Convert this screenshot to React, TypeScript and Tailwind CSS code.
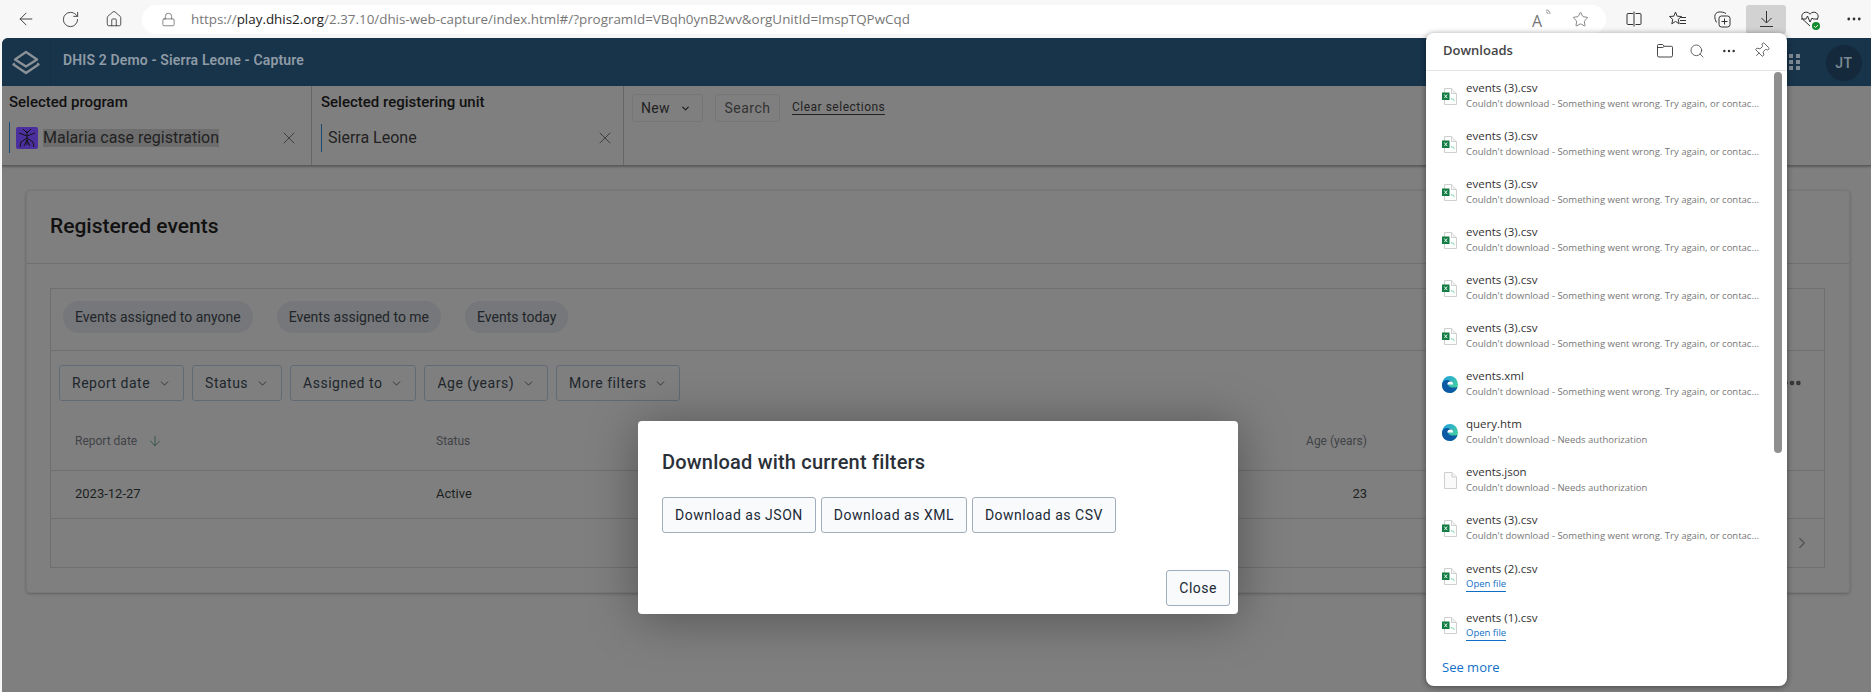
import { ArrowDown, ArrowLeft, ChevronDown, ChevronRight, Ellipsis, House, Lock, RotateCw, Search, Pin, Star, X, MoreHorizontal } from 'lucide-react'

const ROBOTO = 'font-[Roboto,sans-serif]'
const OPEN = 'font-["Open_Sans",sans-serif]'

function ExcelIcon() {
  return (
    <svg width="15" height="17" viewBox="0 0 15 17" className="shrink-0">
      <path d="M2.500.5h7l5 5v11h-12z" fill="#fff" stroke="#cfcfcf" />
      <path d="M9.500.5v5h5" fill="#f2f2f2" stroke="#cfcfcf" />
      <path d="M9 10l1 1.500.8-.8L12.500 13" fill="none" stroke="#7fd8b0" />
      <rect x="0" y="4.500" width="7.500" height="7.500" fill="#107c41" />
      <path d="M2.300 6.500l2.900 3.600M5.200 6.500l-2.900 3.600" stroke="#fff" strokeWidth="0.9" />
    </svg>
  )
}

function EdgeIcon() {
  return (
    <svg width="16" height="17" viewBox="0 0 16 17" className="shrink-0">
      <defs>
        <linearGradient id="edgeTop" x1="0" y1="0" x2="1" y2="1">
          <stop offset="0" stopColor="#1b9de2" />
          <stop offset="1" stopColor="#52de8c" />
        </linearGradient>
      </defs>
      <ellipse cx="8" cy="8.500" rx="8" ry="8.500" fill="url(#edgeTop)" />
      <path d="M0 9.500C0 5.500 2.500 4 5 4c2.500 0 4.500 1.500 5 4H6c0 2.500 2.500 4.500 9.500 3C14 15 11 17 8 17c-4.500 0-8-3-8-7.500z" fill="#0c59a4" />
      <path d="M5.300 8.500h5.900c0-1.800-1.200-3-2.900-3-1.700 0-3 1.300-3 3z" fill="#fff" />
    </svg>
  )
}

function FileIcon() {
  return (
    <svg width="13" height="17" viewBox="0 0 13 17" className="shrink-0">
      <path d="M.5.5h7.500l4.500 4.500v11.500h-12z" fill="#fafafa" stroke="#cfcfcf" />
      <path d="M8 .5v4.500h4.500" fill="#f2f2f2" stroke="#cfcfcf" />
    </svg>
  )
}

type Row = { name: string; detail: string; icon: 'xls' | 'edge' | 'file'; link?: boolean }

function DownloadRow({ name, detail, icon, link }: Row) {
  return (
    <div className={`flex items-center pl-[16px] ${link ? 'h-[49px]' : 'h-12'}`}>
      <div className="flex w-[24px] shrink-0 justify-start">
        {icon === 'xls' && <ExcelIcon />}
        {icon === 'edge' && <EdgeIcon />}
        {icon === 'file' && <div className="pl-[2px]"><FileIcon /></div>}
      </div>
      <div className="min-w-0 flex-1">
        <div className="text-[11.5px] leading-4 text-[#333]">{name}</div>
        {link ? (
          <span className="block w-fit border-b border-[#0f6fc8] text-[9.5px] leading-[14px] text-[#0f6fc8]">{detail}</span>
        ) : (
          <div className="whitespace-nowrap text-[9.5px] leading-4 text-[#777]">{detail}</div>
        )}
      </div>
    </div>
  )
}

const SOMETHING = "Couldn't download - Something went wrong. Try again, or contac..."
const NEEDS = "Couldn't download - Needs authorization"

function DownloadsPanel() {
  const rows: Row[] = [
    { name: 'events (3).csv', detail: SOMETHING, icon: 'xls' },
    { name: 'events (3).csv', detail: SOMETHING, icon: 'xls' },
    { name: 'events (3).csv', detail: SOMETHING, icon: 'xls' },
    { name: 'events (3).csv', detail: SOMETHING, icon: 'xls' },
    { name: 'events (3).csv', detail: SOMETHING, icon: 'xls' },
    { name: 'events (3).csv', detail: SOMETHING, icon: 'xls' },
    { name: 'events.xml', detail: SOMETHING, icon: 'edge' },
    { name: 'query.htm', detail: NEEDS, icon: 'edge' },
    { name: 'events.json', detail: NEEDS, icon: 'file' },
    { name: 'events (3).csv', detail: SOMETHING, icon: 'xls' },
    { name: 'events (2).csv', detail: 'Open file', icon: 'xls', link: true },
    { name: 'events (1).csv', detail: 'Open file', icon: 'xls', link: true },
  ]
  return (
    <div className={`absolute left-[1426px] top-[33px] z-30 w-[361px] rounded-lg bg-white shadow-[0_1px_6px_rgba(0,0,0,0.45)] ${OPEN}`}>
      <div className="flex h-[38px] items-center border-b border-[#e5e5e5] pb-[2px] pl-[17px] pr-[17px]">
        <span className="flex-1 text-[13px] font-semibold text-[#444]">Downloads</span>
        <div className="flex items-center gap-[16px] text-[#333]">
          <svg width="16" height="14" viewBox="0 0 16 14" fill="none" stroke="currentColor" strokeWidth="0.9">
            <path d="M.5 11.500V1.500a1 1 0 0 1 1-1h4l2 1.800h7a1 1 0 0 1 1 1v8.200a1.500 1.500 0 0 1-1.500 1.500h-12A1.500 1.500 0 0 1 .5 11.500zM.5 3.500h5l2-1.200" />
          </svg>
          <Search size={16} strokeWidth={1.1} />
          <MoreHorizontal size={16} strokeWidth={1.7} />
          <Pin size={17} strokeWidth={1} className="rotate-45" />
        </div>
      </div>
      <div className="relative">
        <div className="pt-[1px]">
          {rows.map((r, i) => (
            <DownloadRow key={i} {...r} />
          ))}
        </div>
        <div className="absolute right-[5px] top-[1px] h-[381px] w-[8px] rounded bg-[#8f8f8f]" />
      </div>
      <div className="flex h-[36px] items-center pl-[16px] text-[13px] text-[#0f6fc8]">See more</div>
    </div>
  )
}

function BrowserBar() {
  return (
    <div className="flex h-[38px] items-center bg-[#f7f7f7] text-[#333]">
      <div className="flex w-[142px] shrink-0 items-center pl-[4px]">
        <div className="flex w-[44px] justify-center"><ArrowLeft size={20} strokeWidth={1.1} /></div>
        <div className="flex w-[44px] justify-center"><RotateCw size={19} strokeWidth={1.1} /></div>
        <div className="flex w-[44px] justify-center"><House size={18} strokeWidth={1.1} /></div>
      </div>
      <div className={`flex h-[29px] w-[1464px] shrink-0 items-center rounded-full bg-white pl-[19px] pr-[17px] ${OPEN}`}>
        <Lock size={15} strokeWidth={1} className="text-[#444]" />
        <span className="ml-[15px] flex-1 text-[13.4px] text-[#777]">
          https://<span className="text-[#222]">play.dhis2.org</span>/2.37.10/dhis-web-capture/index.html#/?programId=VBqh0ynB2wv&amp;orgUnitId=ImspTQPwCqd
        </span>
        <div className="relative -mt-[3px] mr-[24px] h-[18px] w-[16px] text-[#777]">
          <span className="text-[16px] leading-[18px]">A</span>
          <svg width="8" height="9" viewBox="0 0 8 9" fill="none" stroke="currentColor" strokeWidth="0.8" className="absolute -right-[5px] top-0">
            <path d="M1 3c1.200 0 2 .8 2 2M1 1c2.500 0 4 1.500 4 4" />
          </svg>
        </div>
        <Star size={17} strokeWidth={1} className="text-[#555]" />
      </div>
      <div className="flex items-center pl-[6px]">
        <div className="flex h-[29px] w-[44px] items-center justify-center">
          <svg width="16" height="16" viewBox="0 0 16 16" fill="none" stroke="currentColor" strokeWidth="1">
            <path d="M7 2.500H2a1 1 0 0 0-1 1v9a1 1 0 0 0 1 1h5M8 .5v15M9.500 2.500H14a1 1 0 0 1 1 1v9a1 1 0 0 1-1 1H9.500" />
          </svg>
        </div>
        <div className="flex h-[29px] w-[44px] items-center justify-center">
          <svg width="18" height="16" viewBox="0 0 18 16" fill="none" stroke="currentColor" strokeWidth="1">
            <path d="M6.500 1l1.700 4.200 4.300.3-3.300 2.900 1 4.400-3.700-2.400-3.700 2.400 1-4.400L.5 5.500l4.300-.3z" />
            <path d="M12 6.500h5M11 9.500h6M11 12.500h6" />
          </svg>
        </div>
        <div className="flex h-[29px] w-[44px] items-center justify-center">
          <svg width="17" height="17" viewBox="0 0 17 17" fill="none" stroke="currentColor" strokeWidth="1">
            <path d="M2.500 11.500C1.500 9.500.8 7.500.8 5.500.8 3 2.500 1.200 5 1c2.500-.2 5 .3 7 1.500" />
            <rect x="5" y="5" width="11" height="11" rx="2.500" />
            <path d="M10.500 7.500v6M7.500 10.500h6" />
          </svg>
        </div>
        <div className="mx-[2px] flex h-[29px] w-[40px] items-center justify-center rounded-[3px] bg-[#d2d2d2]">
          <svg width="13" height="16" viewBox="0 0 13 16" fill="none" stroke="currentColor" strokeWidth="1">
            <path d="M6.500 0v11.500M1.500 7l5 5 5-5M0 15.500h13" />
          </svg>
        </div>
        <div className="relative flex h-[29px] w-[44px] items-center justify-center">
          <svg width="18" height="16" viewBox="0 0 18 16" fill="none" stroke="currentColor" strokeWidth="1">
            <path d="M9 15L2 8.500C.2 6.500.5 3.500 2.500 2c2-1.500 5-1 6.500 1.200C10.500 1 13.500.5 15.500 2c2 1.500 2.300 4.500.5 6.500" />
            <path d="M0 8h5l1.500-3 2.500 6 2-4 1 1h5" />
          </svg>
          <svg width="8" height="8" viewBox="0 0 8 8" className="absolute bottom-[4px] left-[24px]">
            <circle cx="4" cy="4" r="4" fill="#138a2e" />
            <path d="M2 4l1.500 1.500L6 3" fill="none" stroke="#fff" strokeWidth="0.9" />
          </svg>
        </div>
        <div className="flex h-[29px] w-[44px] items-center justify-center"><MoreHorizontal size={18} strokeWidth={1.7} /></div>
      </div>
    </div>
  )
}

function FilterButton({ label }: { label: string }) {
  return (
    <div className="flex h-9 items-center gap-2 rounded-[3px] border border-[#626b75] px-3 text-sm tracking-[0.5px] text-[#20262c]">
      {label}
      <ChevronDown size={13} strokeWidth={1.5} />
    </div>
  )
}

function Chip({ label }: { label: string }) {
  return <div className="flex h-8 items-center rounded-full bg-[#75777a] px-3 text-sm text-[#222529]">{label}</div>
}

function DialogButton({ label }: { label: string }) {
  return (
    <div className="flex h-9 items-center rounded-[3px] border border-[#a0adba] bg-[#f8fafc] px-3 text-sm tracking-[0.5px] text-[#212934]">{label}</div>
  )
}

export default function App() {
  return (
    <div className={`relative h-[692px] w-[1871px] overflow-hidden bg-[#f7f7f7] ${ROBOTO}`}>
      <BrowserBar />

      <div className="ml-[2px] h-[654px] overflow-hidden rounded-tl-md bg-[#7f7f7f]">
        {/* app header */}
        <div className="flex h-[48px] items-center bg-[#18344b]">
          <div className="flex h-full w-[49px] items-center justify-center border-r border-[#16304a]">
            <svg width="28" height="25" viewBox="0 0 28 25" fill="none" stroke="#8b9196" strokeWidth="2.300" strokeLinejoin="round">
              <path d="M14 2L25 9.500 14 16.500 3 9.500z" />
              <path d="M3 13.500L1.500 14.500 14 23l12.500-8.500-1.500-1" />
            </svg>
          </div>
          <span className="-mt-[4px] ml-[12px] text-sm font-semibold tracking-[0.01em] text-[#8e9ba6]">DHIS 2 Demo - Sierra Leone - Capture</span>
          <svg width="18" height="18" viewBox="0 0 18 18" fill="#7d8a95" className="ml-auto mr-[26px]">
            <rect x="0" y="1" width="4" height="4" /><rect x="7" y="1" width="4" height="4" /><rect x="14" y="1" width="4" height="4" />
            <rect x="0" y="7" width="4" height="4" /><rect x="7" y="7" width="4" height="4" /><rect x="14" y="7" width="4" height="4" />
            <rect x="0" y="13" width="4" height="4" /><rect x="7" y="13" width="4" height="4" /><rect x="14" y="13" width="4" height="4" />
          </svg>
          <div className="mr-[9px] mt-[2px] flex size-9 items-center justify-center rounded-full bg-[#142a3c] text-sm font-medium tracking-wider text-[#7d8a95]">JT</div>
        </div>

        {/* selection bar */}
        <div className="flex h-[80px] border-b border-[#5c5c5c] shadow-[0_1px_2px_rgba(0,0,0,0.3)]">
          <div className="w-[310px] border-r border-[#666] pl-[7px] pr-[12px] pt-[6px]">
            <div className="text-[15px] font-medium leading-5 text-[#111]">Selected program</div>
            <div className="mt-[10px] flex h-[31px] items-center border-l border-[#1a4a72] pl-[6px]">
              <div className="flex size-[22px] items-center justify-center rounded-[2px] bg-[#4b2f9e]">
                <svg width="18" height="20" viewBox="0 0 18 20" fill="none" stroke="#141414" strokeWidth="1">
                  <path d="M9 3v14M9 5L5 1M9 5l4-4M9 8L1 5M9 8l8-3M9 10L3 14l-1 5M9 10l6 4 1 5M9 12l-3 6M9 12l3 6" />
                </svg>
              </div>
              <span className="ml-[5px] bg-[#6d6d6d] text-base leading-[18px] text-[#222]">Malaria case registration</span>
              <X size={20} strokeWidth={1} className="ml-auto text-[#333]" />
            </div>
          </div>
          <div className="w-[312px] border-r border-[#666] pl-[9px] pr-[8px] pt-[6px]">
            <div className="text-[15px] font-medium leading-5 text-[#111]">Selected registering unit</div>
            <div className="mt-[12px] flex h-[28px] items-center border-l border-[#1a4a72] pl-[6px]">
              <span className="text-base text-[#222]">Sierra Leone</span>
              <X size={20} strokeWidth={1} className="ml-auto text-[#333]" />
            </div>
          </div>
          <div className="flex items-start pl-[8px] pt-2">
            <div className="flex h-[28px] w-[71px] items-center gap-[10px] rounded-[3px] border border-[#757575] pl-[8px] text-sm tracking-wide text-[#222]">
              New
              <ChevronDown size={11} strokeWidth={3} />
            </div>
            <div className="ml-[12px] flex h-[28px] w-[65px] items-center justify-center rounded-[3px] border border-[#757575] text-sm tracking-[0.5px] text-[#333]">Search</div>
            <span className="ml-[12px] mt-[6px] border-b border-[#222] text-xs leading-[14px] tracking-[0.5px] text-[#222]">Clear selections</span>
          </div>
        </div>

        {/* registered events card */}
        <div className="ml-[24px] mr-[21px] mt-[24px] rounded border border-[#777] shadow-[0_1px_3px_rgba(0,0,0,0.25)]">
          <div className="flex h-[73px] items-center border-b border-[#6f6f6f] pl-[23px] text-[21px] font-medium text-[#111]">Registered events</div>
          <div className="mb-6 ml-[23px] mr-6 mt-6 h-[280px] border border-[#6f6f6f]">
            <div className="flex h-[62px] items-center gap-6 border-b border-[#6f6f6f] pb-[6px] pl-[12px]">
              <Chip label="Events assigned to anyone" />
              <Chip label="Events assigned to me" />
              <Chip label="Events today" />
            </div>
            <div className="flex items-center gap-2 pl-[8px] pt-[14px]">
              <FilterButton label="Report date" />
              <FilterButton label="Status" />
              <FilterButton label="Assigned to" />
              <FilterButton label="Age (years)" />
              <FilterButton label="More filters" />
              <Ellipsis size={22} strokeWidth={3} className="ml-auto mr-[21px] text-[#333]" />
            </div>
            <div className="mt-[12px] flex h-[58px] items-center border-b border-[#6f6f6f] pb-[2px] pl-[24px] text-xs text-[#3f4347]">
              <span className="flex w-[361px] items-center gap-[10px]">
                Report date
                <ArrowDown size={16} strokeWidth={1.1} className="text-[#1f4a3a]" />
              </span>
              <span className="w-[869px]">Status</span>
              <span className="w-[62px] whitespace-nowrap text-right">Age (years)</span>
            </div>
            <div className="flex h-[48px] items-center border-b border-[#6f6f6f] pb-[2px] pl-[24px] text-[13px] text-[#1c1f22]">
              <span className="w-[361px]">2023-12-27</span>
              <span className="w-[869px]">Active</span>
              <span className="w-[62px] text-right">23</span>
            </div>
            <div className="flex h-[48px] items-center justify-end pr-[13px]">
              <ChevronRight size={18} strokeWidth={1.5} className="text-[#4f4f4f]" />
            </div>
          </div>
        </div>
      </div>

      {/* download dialog */}
      <div className="absolute left-[638px] top-[421px] z-20 h-[193px] w-[600px] rounded bg-white px-6 pt-[29px] shadow-[0_4px_50px_rgba(0,0,0,0.35)]">
        <div className="text-xl font-medium leading-6 tracking-[0.2px] text-[#2a3038]">Download with current filters</div>
        <div className="mt-[23px] flex gap-[5px]">
          <DialogButton label="Download as JSON" />
          <DialogButton label="Download as XML" />
          <DialogButton label="Download as CSV" />
        </div>
        <div className="absolute bottom-[8px] right-[8px]">
          <DialogButton label="Close" />
        </div>
      </div>

      <DownloadsPanel />
    </div>
  )
}
